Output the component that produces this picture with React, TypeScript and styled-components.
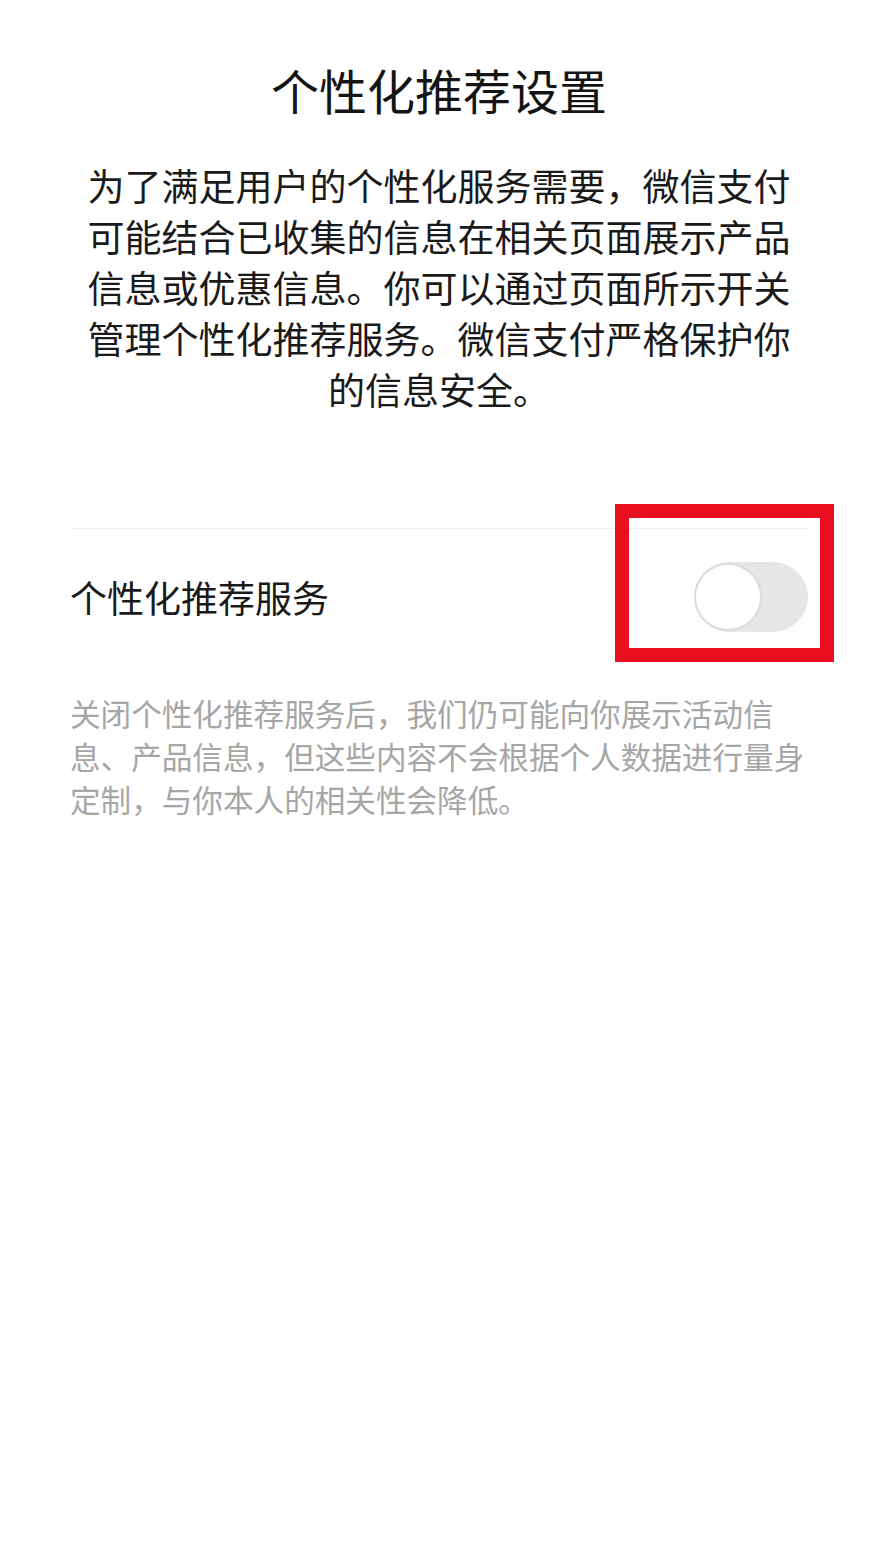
import React, { useState } from "react";
import styled, { createGlobalStyle } from "styled-components";

const GlobalStyle = createGlobalStyle`
  html, body {
    margin: 0;
    padding: 0;
    background: #ffffff;
  }
  body {
    font-family: "Noto Sans CJK SC", "Noto Sans", sans-serif;
    -webkit-font-smoothing: antialiased;
  }
`;

const Page = styled.main`
  width: 878px;
  min-height: 1544px;
  box-sizing: border-box;
  padding: 59px 70px 0;
  display: flex;
  flex-direction: column;
  align-items: center;
  background: #ffffff;
`;

const Title = styled.h1`
  margin: 0;
  font-size: 48px;
  line-height: 60px;
  font-weight: 400;
  color: #141414;
  text-align: center;
`;

const Intro = styled.p`
  margin: 41px 0 0;
  width: 708px;
  font-size: 37px;
  line-height: 51px;
  color: #1a1a1a;
  text-align: center;
`;

const SettingRow = styled.section`
  margin-top: 113px;
  align-self: stretch;
  height: 136px;
  border-top: 1px solid #efefef;
  display: flex;
  align-items: center;
  justify-content: space-between;
`;

const RowLabel = styled.span`
  font-size: 37px;
  line-height: 50px;
  color: #1a1a1a;
`;

const SwitchHolder = styled.div`
  position: relative;
  display: flex;
`;

const Track = styled.button<{ $on: boolean }>`
  position: relative;
  width: 114px;
  height: 70px;
  padding: 0;
  border: none;
  border-radius: 35px;
  background: ${(p) => (p.$on ? "#07c160" : "#e6e6e6")};
  cursor: pointer;
  outline: none;
  transition: background 0.2s;
`;

const Knob = styled.span<{ $on: boolean }>`
  position: absolute;
  top: 3px;
  left: ${(p) => (p.$on ? "47px" : "2px")};
  width: 64px;
  height: 64px;
  border-radius: 50%;
  background: #ffffff;
  box-shadow: 0 0 0 2px #dcdcdc;
  transition: left 0.2s;
`;

/* red callout frame drawn over the switch */
const Highlight = styled.span`
  position: absolute;
  left: -79px;
  top: -58px;
  width: 219px;
  height: 158px;
  box-sizing: border-box;
  border: 14px solid #e8101e;
  pointer-events: none;
`;

const Note = styled.p`
  margin: 27px 0 0;
  align-self: stretch;
  font-size: 30.6px;
  line-height: 43px;
  color: #a6a6a6;
`;

export default function App() {
  const [on, setOn] = useState(false);
  return (
    <>
      <GlobalStyle />
      <Page>
        <Title>个性化推荐设置</Title>
        <Intro>
          为了满足用户的个性化服务需要，微信支付可能结合已收集的信息在相关页面展示产品信息或优惠信息。你可以通过页面所示开关管理个性化推荐服务。微信支付严格保护你的信息安全。
        </Intro>
        <SettingRow>
          <RowLabel>个性化推荐服务</RowLabel>
          <SwitchHolder>
            <Track
              role="switch"
              aria-checked={on}
              aria-label="个性化推荐服务"
              $on={on}
              onClick={() => setOn((v) => !v)}
            >
              <Knob $on={on} />
            </Track>
            <Highlight />
          </SwitchHolder>
        </SettingRow>
        <Note>
          关闭个性化推荐服务后，我们仍可能向你展示活动信息、产品信息，但这些内容不会根据个人数据进行量身定制，与你本人的相关性会降低。
        </Note>
      </Page>
    </>
  );
}
